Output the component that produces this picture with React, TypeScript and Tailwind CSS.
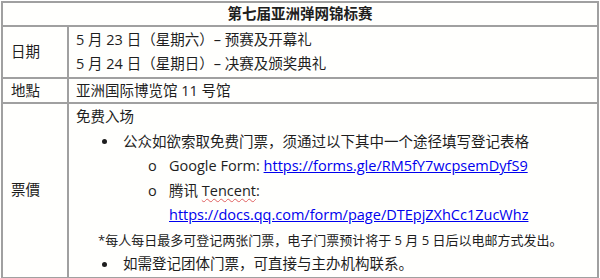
import React from "react";

const font = {
  fontFamily: '"Open Sans", "Noto Sans CJK SC", sans-serif',
};

function Dot() {
  return (
    <span className="w-[47px] shrink-0 pl-[26px] flex items-center h-[24.5px]">
      <span className="block w-[5px] h-[5px] rounded-full bg-[#1e1e1e]" />
    </span>
  );
}

export default function App() {
  return (
    <div className="w-[600px] h-[278px] bg-[#fffffd] text-[#1e1e1e] text-[14.5px]" style={font}>
      <table className="ml-[1px] mt-[1px] w-[598px] border-collapse border-[2px] border-[#8c8c8c]">
        <tbody>
          <tr className="h-[24px]">
            <td colSpan={2} className="border-[2px] border-[#a0a0a0] text-center font-bold leading-[22px]">
              第七届亚洲弹网锦标赛
            </td>
          </tr>
          <tr className="h-[51px]">
            <td className="w-[66px] border-[2px] border-[#a0a0a0] pl-[8px] align-middle">日期</td>
            <td className="border-[2px] border-[#a0a0a0] pl-[7px] py-[1px] leading-[24px]">
              <div>5 月 23 日（星期六）– 预赛及开幕礼</div>
              <div>5 月 24 日（星期日）– 决赛及颁奖典礼</div>
            </td>
          </tr>
          <tr className="h-[25px]">
            <td className="border-[2px] border-[#a0a0a0] pl-[8px] leading-[23px]">地點</td>
            <td className="border-[2px] border-[#a0a0a0] pl-[7px] leading-[23px]">亚洲国际博览馆 11 号馆</td>
          </tr>
          <tr>
            <td className="border-[2px] border-[#a0a0a0] pl-[8px] align-middle">票價</td>
            <td className="border-[2px] border-[#a0a0a0] pl-[7px] pt-[1px] leading-[24.5px]">
              <div>免费入场</div>
              <div className="flex">
                <Dot />
                <span>公众如欲索取免费门票，须通过以下其中一个途径填写登记表格</span>
              </div>
              <div className="flex">
                <span className="w-[93px] shrink-0 pl-[72px]">o</span>
                <span>
                  Google Form:{" "}
                  <a className="text-[#0000ee] underline" href="#">
                    https://forms.gle/RM5fY7wcpsemDyfS9
                  </a>
                </span>
              </div>
              <div className="flex">
                <span className="w-[93px] shrink-0 pl-[72px]">o</span>
                <div>
                  <div>
                    腾讯{" "}
                    <span className="underline decoration-wavy decoration-[#e06060] decoration-1 underline-offset-2">
                      Tencent
                    </span>
                    :
                  </div>
                  <a className="text-[#0000ee] underline" href="#">
                    https://docs.qq.com/form/page/DTEpjZXhCc1ZucWhz
                  </a>
                </div>
              </div>
              <div className="pl-[22px] text-[13px] whitespace-nowrap">
                *每人每日最多可登记两张门票，电子门票预计将于 5 月 5 日后以电邮方式发出。
              </div>
              <div className="flex">
                <Dot />
                <span>如需登记团体门票，可直接与主办机构联系。</span>
              </div>
            </td>
          </tr>
        </tbody>
      </table>
    </div>
  );
}
